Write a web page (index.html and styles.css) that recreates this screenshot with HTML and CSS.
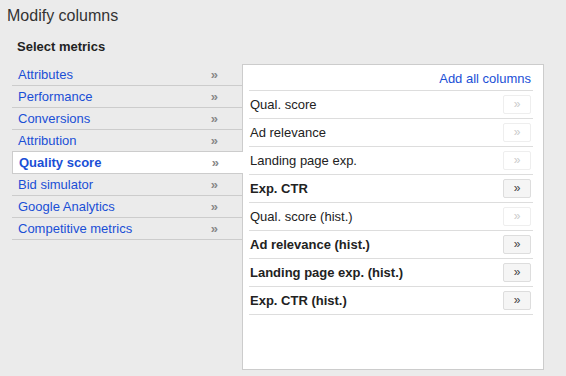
FILE: index.html
```html
<!DOCTYPE html>
<html lang="en">

<head>
  <meta charset="UTF-8" />
  <title>Modify columns</title>
  <link rel="stylesheet" href="styles.css">
</head>

<body>
  <h1 class="title">Modify columns</h1>
  <h2 class="subtitle">Select metrics</h2>

  <div class="picker">
    <ul class="groups">
      <li>Attributes <span class="chev">&raquo;</span></li>
      <li>Performance <span class="chev">&raquo;</span></li>
      <li>Conversions <span class="chev">&raquo;</span></li>
      <li>Attribution <span class="chev">&raquo;</span></li>
      <li class="active">Quality score <span class="chev">&raquo;</span></li>
      <li>Bid simulator <span class="chev">&raquo;</span></li>
      <li>Google Analytics <span class="chev">&raquo;</span></li>
      <li>Competitive metrics <span class="chev">&raquo;</span></li>
    </ul>

    <div class="panel">
      <div class="panel-head"><a href="#">Add all columns</a></div>
      <div class="metric">Qual. score <button disabled>&raquo;</button></div>
      <div class="metric">Ad relevance <button disabled>&raquo;</button></div>
      <div class="metric">Landing page exp. <button disabled>&raquo;</button></div>
      <div class="metric on">Exp. CTR <button>&raquo;</button></div>
      <div class="metric">Qual. score (hist.) <button disabled>&raquo;</button></div>
      <div class="metric on">Ad relevance (hist.) <button>&raquo;</button></div>
      <div class="metric on">Landing page exp. (hist.) <button>&raquo;</button></div>
      <div class="metric on">Exp. CTR (hist.) <button>&raquo;</button></div>
    </div>
  </div>
</body>

</html>
```

FILE: styles.css
```css
body {
  margin: 0;
  background: #ebebeb;
  font-family: "Liberation Sans", Arial, sans-serif;
  font-size: 13px;
  color: #222;
}

.title {
  font-size: 16px;
  font-weight: normal;
  color: #333;
  margin: 0;
  padding: 7px 7px 0;
  line-height: 18px;
}

.subtitle {
  font-size: 13px;
  font-weight: bold;
  margin: 0;
  padding: 14px 17px 0;
  line-height: 15px;
}

.picker {
  display: flex;
  align-items: flex-start;
  margin: 10px 0 0 12px;
}

.groups {
  list-style: none;
  margin: 0;
  padding: 0;
  width: 230px;
  position: relative;
  z-index: 1;
}

.groups li {
  display: flex;
  justify-content: space-between;
  height: 21px;
  line-height: 21px;
  padding: 0 24px 0 6px;
  border-bottom: 1px solid #ccc;
  color: #1a4fd6;
}

.groups li.active {
  background: #fff;
  border: 1px solid #ccc;
  border-right: none;
  margin: -1px -1px 0 0;
  height: 21px;
  line-height: 21px;
  padding-left: 6px;
  font-weight: bold;
}

.chev {
  color: #888;
  font-weight: bold;
}

.panel {
  width: 284px;
  height: 304px;
  background: #fff;
  border: 1px solid #ccc;
  padding: 0 10px 0 6px;
}

.panel-head {
  text-align: right;
  height: 25px;
  line-height: 27px;
  border-bottom: 1px solid #ddd;
}

.panel-head a {
  color: #1a4fd6;
  text-decoration: none;
  padding-right: 2px;
}

.metric {
  display: flex;
  justify-content: space-between;
  align-items: center;
  height: 27px;
  padding-left: 1px;
  border-bottom: 1px solid #ddd;
  color: #222;
}

.metric.on {
  font-weight: bold;
}

.metric button {
  width: 28px;
  height: 19px;
  margin-right: 2px;
  padding: 0;
  font-family: inherit;
  font-size: 12px;
  font-weight: normal;
  line-height: 17px;
  border: 1px solid #ddd;
  border-radius: 2px;
  background: #f5f5f5;
  color: #444;
}

.metric button:disabled {
  background: #fff;
  border-color: #eee;
  color: #ccc;
}
```
